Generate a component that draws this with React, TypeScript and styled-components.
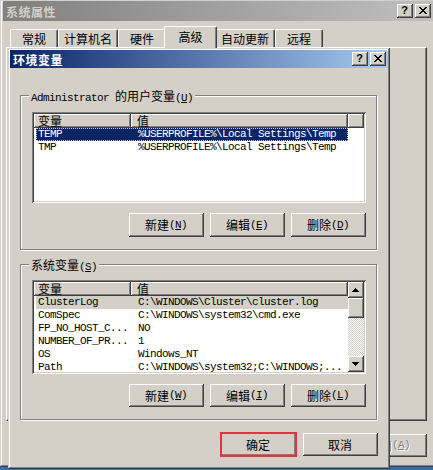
import React from "react";
import styled, { createGlobalStyle, css } from "styled-components";

const FACE = "#d4d0c8";
const SHADOW = "#808080";
const DARK = "#404040";
const CJK = `"Noto Sans CJK SC", "Noto Sans", sans-serif`;
const MONO = `"Liberation Mono", "DejaVu Sans Mono", monospace`;

const GlobalStyle = createGlobalStyle`
  html, body {
    margin: 0;
    padding: 0;
  }
  body {
    background: #3a6ea5;
    font-family: ${CJK};
    font-size: 12px;
  }
`;

// классические рамки win2000
const raised = css`
  box-shadow: inset -1px -1px 0 ${DARK}, inset 1px 1px 0 #fff, inset -2px -2px 0 ${SHADOW};
`;

const frame = css`
  box-shadow: inset -1px -1px 0 ${DARK}, inset 1px 1px 0 ${FACE}, inset -2px -2px 0 ${SHADOW},
    inset 2px 2px 0 #fff;
`;

const userVars = [
  ["TEMP", "%USERPROFILE%\\Local Settings\\Temp"],
  ["TMP", "%USERPROFILE%\\Local Settings\\Temp"],
];

const systemVars = [
  ["ClusterLog", "C:\\WINDOWS\\Cluster\\cluster.log"],
  ["ComSpec", "C:\\WINDOWS\\system32\\cmd.exe"],
  ["FP_NO_HOST_C...", "NO"],
  ["NUMBER_OF_PR...", "1"],
  ["OS", "Windows_NT"],
  ["Path", "C:\\WINDOWS\\system32;C:\\WINDOWS;..."],
];

const CloseGlyph = () => (
  <svg width="8" height="7" viewBox="0 0 8 7" shapeRendering="crispEdges">
    <path d="M0 0H2L4 2.4L6 0H8L5.1 3.5L8 7H6L4 4.6L2 7H0L2.9 3.5Z" fill="#000" />
  </svg>
);

const Arrow = ({ down }: { down?: boolean }) => (
  <svg width="7" height="4" viewBox="0 0 7 4" shapeRendering="crispEdges">
    <polygon points={down ? "0,0 7,0 3.5,4" : "3.5,0 7,4 0,4"} fill="#000" />
  </svg>
);

const CaptionButtons = () => (
  <CapGroup>
    <CapButton>
      <HelpMark>?</HelpMark>
    </CapButton>
    <CapButton>
      <CloseGlyph />
    </CapButton>
  </CapGroup>
);

type ListProps = { rows: string[][]; selected: "active" | "inactive"; height: number; scroll?: boolean };

const VarList: React.FC<ListProps> = ({ rows, selected, height, scroll }) => (
  <ListView $h={height}>
    <ListArea>
      <HeaderRow>
        <HeaderCell $w={97} $pad={4}>变量</HeaderCell>
        <HeaderCell $w={217} $pad={6}>值</HeaderCell>
        {!scroll && <HeaderCell />}
      </HeaderRow>
      {rows.map(([name, value], i) => (
        <Row key={name} $sel={i === 0 ? selected : undefined}>
          <Cell $w={95} $pad={2}>{name}</Cell>
          <Cell $w={217} $pad={7}>{value}</Cell>
        </Row>
      ))}
    </ListArea>
    {scroll && (
      <ScrollBar>
        <ScrollBtn>
          <Arrow />
        </ScrollBtn>
        <Thumb />
        <Track />
        <ScrollBtn>
          <Arrow down />
        </ScrollBtn>
      </ScrollBar>
    )}
  </ListView>
);

const Label = ({ text, hot }: { text: string; hot: string }) => (
  <>
    {text}
    <Latin>
      (<U>{hot}</U>)
    </Latin>
  </>
);

export default function App() {
  return (
    <>
      <GlobalStyle />
      <Desktop>
        <Window>
          <TitleBar $h={20}>
            <TitleText>系统属性</TitleText>
            <CaptionButtons />
          </TitleBar>
          <TabRow>
            <Tab>常规</Tab>
            <Tab>计算机名</Tab>
            <Tab>硬件</Tab>
            <Tab $active>高级</Tab>
            <Tab>自动更新</Tab>
            <Tab>远程</Tab>
          </TabRow>
          <TabPanel />
          <Footer $right={6} $top={13} $gap={6}>
            <Button $h={23}>确定</Button>
            <Button $h={23}>取消</Button>
            <Button $h={23} $disabled>
              <Label text="应用" hot="A" />
            </Button>
          </Footer>
        </Window>

        <Dialog>
          <TitleBar $h={18} $active>
            <TitleText>环境变量</TitleText>
            <CaptionButtons />
          </TitleBar>
          <DialogBody>
            <GroupBox $h={155} $pt={16}>
              <GroupLabel>
                <Latin>Administrator </Latin>的用户变量
                <Latin>
                  (<U>U</U>)
                </Latin>
              </GroupLabel>
              <VarList rows={userVars} selected="active" height={91} />
              <ButtonRow>
                <Button $h={24}>
                  <Label text="新建" hot="N" />
                </Button>
                <Button $h={24}>
                  <Label text="编辑" hot="E" />
                </Button>
                <Button $h={24}>
                  <Label text="删除" hot="D" />
                </Button>
              </ButtonRow>
            </GroupBox>
            <GroupBox $h={156} $pt={15} $gapTop={14}>
              <GroupLabel>
                <Label text="系统变量" hot="S" />
              </GroupLabel>
              <VarList rows={systemVars} selected="inactive" height={94} scroll />
              <ButtonRow>
                <Button $h={23}>
                  <Label text="新建" hot="W" />
                </Button>
                <Button $h={23}>
                  <Label text="编辑" hot="I" />
                </Button>
                <Button $h={23}>
                  <Label text="删除" hot="L" />
                </Button>
              </ButtonRow>
            </GroupBox>
          </DialogBody>
          <Footer $right={10} $top={13} $gap={7}>
            <Button $h={23} $marked>
              确定
            </Button>
            <Button $h={23}>取消</Button>
          </Footer>
        </Dialog>
      </Desktop>
    </>
  );
}

const Desktop = styled.div`
  position: relative;
  width: 433px;
  height: 470px;
  overflow: hidden;
`;

const Window = styled.div`
  width: 436px;
  height: 467px;
  box-sizing: border-box;
  padding: 1px 3px 3px;
  background: ${FACE};
  ${frame};
  display: flex;
  flex-direction: column;
`;

const TitleBar = styled.div<{ $h: number; $active?: boolean }>`
  height: ${(p) => p.$h}px;
  flex: none;
  display: flex;
  align-items: center;
  padding: 0 2px 0 3px;
  background: linear-gradient(
    to right,
    ${(p) => (p.$active ? "#0a246a, #a6caf0" : "#808080, #c0c0c0")}
  );
  color: ${(p) => (p.$active ? "#fff" : FACE)};
`;

const TitleText = styled.div`
  flex: 1;
  font-weight: bold;
  font-size: 12px;
  letter-spacing: 0.5px;
  white-space: nowrap;
`;

const CapGroup = styled.div`
  display: flex;
  gap: 2px;
`;

const CapButton = styled.div`
  width: 16px;
  height: 14px;
  box-sizing: border-box;
  background: ${FACE};
  ${raised};
  display: flex;
  align-items: center;
  justify-content: center;
  padding: 0 1px 1px 0;
`;

const HelpMark = styled.span`
  font-family: "Liberation Sans", sans-serif;
  font-weight: bold;
  font-size: 11px;
  line-height: 11px;
  color: #000;
`;

const TabRow = styled.div`
  display: flex;
  align-items: flex-end;
  height: 21px;
  margin-top: 5px;
  padding-left: 7px;
  position: relative;
  z-index: 1;
`;

const Tab = styled.div<{ $active?: boolean }>`
  box-sizing: border-box;
  min-width: ${(p) => (p.$active ? 53 : 48)}px;
  height: ${(p) => (p.$active ? 22 : 18)}px;
  margin: ${(p) => (p.$active ? "0 -2px -1px" : "0")};
  padding: ${(p) => (p.$active ? "0 5px 3px" : "0 5px")};
  background: ${FACE};
  border-top: 1px solid #fff;
  border-left: 1px solid #fff;
  border-right: 1px solid ${DARK};
  border-radius: 2px 2px 0 0;
  box-shadow: inset -1px 0 0 ${SHADOW};
  display: flex;
  align-items: center;
  justify-content: center;
  color: #000;
  font-size: 12px;
  white-space: nowrap;
  position: relative;
  z-index: ${(p) => (p.$active ? 1 : 0)};
`;

const TabPanel = styled.div`
  height: 374px;
  flex: none;
  margin: 0 6px 0 3px;
  box-sizing: border-box;
  border-top: 1px solid #fff;
  border-left: 1px solid #fff;
  border-right: 1px solid ${DARK};
  border-bottom: 1px solid ${DARK};
  box-shadow: inset -1px -1px 0 ${SHADOW};
`;

const Footer = styled.div<{ $right: number; $top: number; $gap: number }>`
  display: flex;
  justify-content: flex-end;
  gap: ${(p) => p.$gap}px;
  margin-top: ${(p) => p.$top}px;
  padding-right: ${(p) => p.$right}px;
`;

const Button = styled.button<{ $h: number; $disabled?: boolean; $marked?: boolean }>`
  width: 75px;
  height: ${(p) => p.$h}px;
  box-sizing: border-box;
  padding: 0 1px 1px 0;
  border: none;
  background: ${FACE};
  ${raised};
  display: flex;
  align-items: center;
  justify-content: center;
  font-family: ${CJK};
  font-size: 12px;
  color: ${(p) => (p.$disabled ? SHADOW : "#000")};
  text-shadow: ${(p) => (p.$disabled ? "1px 1px 0 #fff" : "none")};
  white-space: nowrap;
  outline: ${(p) => (p.$marked ? "2px solid #e8323c" : "none")};
  outline-offset: -1px;
`;

const Latin = styled.span`
  font-family: ${MONO};
  font-size: 11px;
  letter-spacing: -0.6px;
`;

const U = styled.span`
  text-decoration: underline;
`;

const Dialog = styled.div`
  position: absolute;
  left: 8px;
  top: 48px;
  width: 382px;
  height: 421px;
  box-sizing: border-box;
  padding: 2px;
  background: ${FACE};
  ${frame};
  display: flex;
  flex-direction: column;
  z-index: 2;
`;

const DialogBody = styled.div`
  display: flex;
  flex-direction: column;
  padding: 27px 0 0 10px;
`;

const GroupBox = styled.div<{ $h: number; $pt: number; $gapTop?: number }>`
  position: relative;
  width: 357px;
  height: ${(p) => p.$h}px;
  box-sizing: border-box;
  margin-top: ${(p) => p.$gapTop ?? 0}px;
  padding: ${(p) => p.$pt}px 10px 0 11px;
  border: 1px solid ${SHADOW};
  box-shadow: 1px 1px 0 #fff, inset 1px 1px 0 #fff;
  display: flex;
  flex-direction: column;
`;

const GroupLabel = styled.div`
  position: absolute;
  top: -8px;
  left: 8px;
  padding: 0 2px;
  line-height: 15px;
  background: ${FACE};
  color: #000;
  white-space: nowrap;
`;

const ButtonRow = styled.div`
  display: flex;
  justify-content: flex-end;
  gap: 6px;
  margin-top: 10px;
`;

const ListView = styled.div<{ $h: number }>`
  width: 334px;
  height: ${(p) => p.$h}px;
  flex: none;
  box-sizing: border-box;
  padding: 2px;
  background: #fff;
  box-shadow: inset 1px 1px 0 ${SHADOW}, inset -1px -1px 0 #fff, inset 2px 2px 0 ${DARK},
    inset -2px -2px 0 ${FACE};
  display: flex;
  overflow: hidden;
`;

const ListArea = styled.div`
  flex: 1;
  min-width: 0;
  display: flex;
  flex-direction: column;
`;

const HeaderRow = styled.div`
  display: flex;
  height: 14px;
  flex: none;
`;

const HeaderCell = styled.div<{ $w?: number; $pad?: number }>`
  width: ${(p) => (p.$w ? `${p.$w}px` : "auto")};
  flex: ${(p) => (p.$w ? "none" : 1)};
  box-sizing: border-box;
  padding: 0 0 1px ${(p) => p.$pad ?? 0}px;
  background: ${FACE};
  ${raised};
  display: flex;
  align-items: center;
  font-size: 12px;
  line-height: 12px;
  color: #000;
`;

const Row = styled.div<{ $sel?: "active" | "inactive" }>`
  display: flex;
  flex: none;
  width: 312px;
  height: 13px;
  margin-left: 2px;
  box-sizing: border-box;
  background: ${(p) => (p.$sel === "active" ? "#0a246a" : p.$sel === "inactive" ? FACE : "transparent")};
  color: ${(p) => (p.$sel === "active" ? "#fff" : "#000")};
  outline: ${(p) => (p.$sel === "active" ? `1px dotted ${FACE}` : "none")};
  outline-offset: -1px;
  font-family: ${MONO};
  font-size: 11px;
  letter-spacing: -0.6px;
  line-height: 13px;
  white-space: pre;
`;

const Cell = styled.div<{ $w: number; $pad: number }>`
  width: ${(p) => p.$w}px;
  flex: none;
  box-sizing: border-box;
  padding-left: ${(p) => p.$pad}px;
  overflow: hidden;
`;

const ScrollBar = styled.div`
  width: 16px;
  flex: none;
  display: flex;
  flex-direction: column;
`;

const ScrollBtn = styled.div`
  height: 16px;
  flex: none;
  box-sizing: border-box;
  background: ${FACE};
  ${raised};
  display: flex;
  align-items: center;
  justify-content: center;
  padding: 0 1px 1px 0;
`;

const Thumb = styled.div`
  height: 20px;
  flex: none;
  background: ${FACE};
  ${raised};
`;

const Track = styled.div`
  flex: 1;
  background: repeating-conic-gradient(#fff 0% 25%, ${FACE} 0% 50%) 0 0 / 2px 2px;
`;
